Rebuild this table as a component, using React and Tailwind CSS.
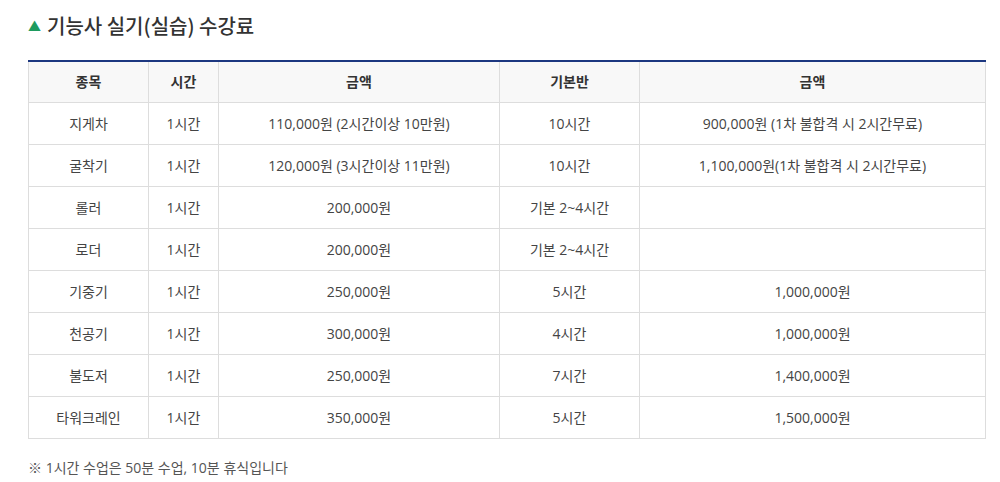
const rows = [
  ["지게차", "1시간", "110,000원 (2시간이상 10만원)", "10시간", "900,000원 (1차 불합격 시 2시간무료)"],
  ["굴착기", "1시간", "120,000원 (3시간이상 11만원)", "10시간", "1,100,000원(1차 불합격 시 2시간무료)"],
  ["롤러", "1시간", "200,000원", "기본 2~4시간", ""],
  ["로더", "1시간", "200,000원", "기본 2~4시간", ""],
  ["기중기", "1시간", "250,000원", "5시간", "1,000,000원"],
  ["천공기", "1시간", "300,000원", "4시간", "1,000,000원"],
  ["불도저", "1시간", "250,000원", "7시간", "1,400,000원"],
  ["타워크레인", "1시간", "350,000원", "5시간", "1,500,000원"],
];

const heads = ["종목", "시간", "금액", "기본반", "금액"];
const widths = ["w-[120px]", "w-[70px]", "w-[281px]", "w-[140px]", "w-[346px]"];

const App = () => {
  return (
    <div
      className="w-[1000px] h-[482px] bg-white pl-[28px] pr-[15px] pt-[12px]"
      style={{ fontFamily: '"Noto Sans CJK KR", "Noto Sans", sans-serif' }}
    >
      <h2 className="flex items-center gap-[6px] text-[20px] leading-[28px] text-[#333] font-medium">
        <span className="text-[#1e9b5f] text-[13px]">▲</span>
        기능사 실기(실습) 수강료
      </h2>

      <table
        className="mt-[20px] w-[957px] border-collapse table-fixed border-t-[2px] border-t-[#1c3780] text-[14px] text-[#444]"
        style={{ fontFamily: '"Open Sans", "Noto Sans CJK KR", sans-serif' }}
      >
        <thead>
          <tr className="bg-[#f8f8f8]">
            {heads.map((h, i) => (
              <th key={i} className={`${widths[i]} h-[41px] border border-[#ddd] border-t-0 font-bold text-[#333] text-center`}>
                {h}
              </th>
            ))}
          </tr>
        </thead>
        <tbody>
          {rows.map((r, i) => (
            <tr key={i}>
              {r.map((c, j) => (
                <td key={j} className="h-[42px] border border-[#ddd] text-center">
                  {c}
                </td>
              ))}
            </tr>
          ))}
        </tbody>
      </table>

      <p
        className="mt-[18px] text-[14px] text-[#555]"
        style={{ fontFamily: '"Open Sans", "Noto Sans CJK KR", sans-serif' }}
      >
        ※ 1시간 수업은 50분 수업, 10분 휴식입니다
      </p>
    </div>
  );
};

export default App;
